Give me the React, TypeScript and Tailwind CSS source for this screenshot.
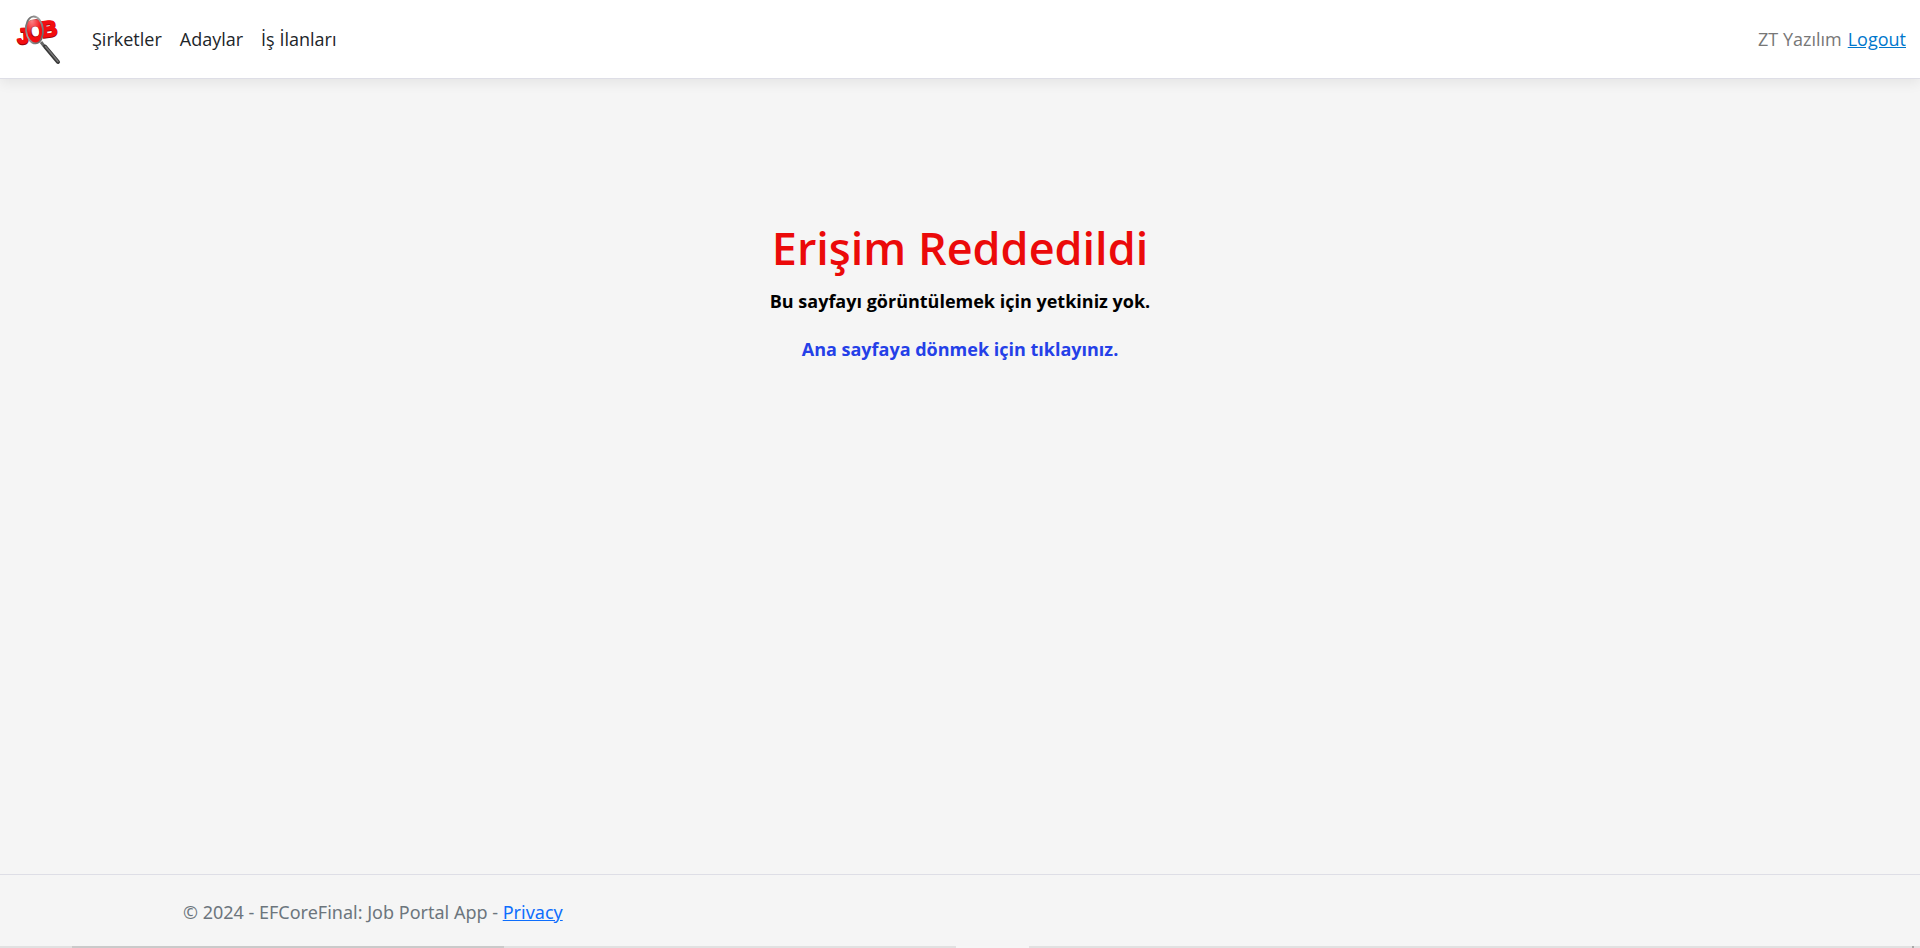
const navItems = ["Şirketler", "Adaylar", "İş İlanları"];

function Logo() {
  return (
    <svg viewBox="0 0 60 60" className="size-15" role="img" aria-label="Job">
      <defs>
        <linearGradient id="handle" x1="0" y1="1" x2="1" y2="0">
          <stop offset="0" stopColor="#333" />
          <stop offset="0.5" stopColor="#777" />
          <stop offset="1" stopColor="#444" />
        </linearGradient>
        <linearGradient id="ring" x1="0" y1="0" x2="1" y2="1">
          <stop offset="0" stopColor="#555" />
          <stop offset="0.4" stopColor="#a5a5a5" />
          <stop offset="1" stopColor="#555" />
        </linearGradient>
        <radialGradient id="glass" cx="0.4" cy="0.15" r="0.55">
          <stop offset="0" stopColor="#fff" stopOpacity="0.5" />
          <stop offset="1" stopColor="#fff" stopOpacity="0" />
        </radialGradient>
        <clipPath id="lens">
          <ellipse cx="26.5" cy="21" rx="8.5" ry="13.5" transform="rotate(-6 26 21)" />
        </clipPath>
      </defs>
      <g
        fontFamily="'Liberation Sans', Arial, sans-serif"
        fontWeight="700"
        strokeLinejoin="round"
        textAnchor="middle"
      >
        <g fill="#9b0508" stroke="#9b0508" strokeWidth="2">
          <text x="15" y="35" fontSize="21" transform="rotate(-3 14 26)">J</text>
          <text x="41" y="28" fontSize="22" transform="rotate(-8 41 20)">B</text>
        </g>
        <g fill="#f20d10" stroke="#f20d10" strokeWidth="1.6">
          <text x="15" y="34" fontSize="21" transform="rotate(-3 13 26)">J</text>
          <text x="41" y="27" fontSize="22" transform="rotate(-8 42 20)">B</text>
        </g>
        <g clipPath="url(#lens)">
          <ellipse cx="26.5" cy="21" rx="10" ry="14" fill="#fff" />
          <text x="27.5" y="32.5" fontSize="29" fontFamily="'Liberation Sans Narrow', 'Liberation Sans', sans-serif" fill="#b0080b" stroke="#b0080b" strokeWidth="4" transform="rotate(-6 27 22)">O</text>
          <text x="26.5" y="32.5" fontSize="29" fontFamily="'Liberation Sans Narrow', 'Liberation Sans', sans-serif" fill="#f40c10" stroke="#f40c10" strokeWidth="2.5" transform="rotate(-6 27 22)">O</text>
        </g>
      </g>
      <ellipse cx="26.5" cy="21" rx="8.5" ry="13.5" fill="url(#glass)" stroke="url(#ring)" strokeWidth="1.8" transform="rotate(-6 26 21)" />
      <path d="M33 33 L36 37" stroke="#666" strokeWidth="3" />
      <path d="M37 37.5 L50 53" stroke="#383838" strokeWidth="4" strokeLinecap="round" />
      <path d="M37.5 37.5 L50 52.5" stroke="url(#handle)" strokeWidth="1.5" strokeLinecap="round" />
    </svg>
  );
}

export default function App() {
  return (
    <div className="flex min-h-screen flex-col bg-[#f5f5f5] font-['Open_Sans','Noto_Sans',sans-serif] text-lg leading-7">
      <header className="border-b border-[#dedee6] bg-white shadow-[0_4px_12px_rgba(0,0,0,0.07)]">
        <nav className="flex h-[78px] items-center justify-between pr-3.5 pl-2">
          <div className="flex items-center">
            <a href="#" aria-label="Job Portal">
              <Logo />
            </a>
            <ul className="ml-6 flex gap-[18px] text-[#212529]">
              {navItems.map((item) => (
                <li key={item}>
                  <a href="#">{item}</a>
                </li>
              ))}
            </ul>
          </div>
          <div className="flex gap-1.5">
            <span className="text-[#777]">ZT Yazılım</span>
            <a href="#" className="text-[#0077cc] underline">
              Logout
            </a>
          </div>
        </nav>
      </header>

      <main className="flex-1 pt-[140px] text-center">
        <h1 className="text-[45px] leading-[58px] font-semibold text-[#eb0a0a]">Erişim Reddedildi</h1>
        <p className="mt-2.5 font-bold text-black">Bu sayfayı görüntülemek için yetkiniz yok.</p>
        <p className="mt-5 font-bold text-[#2440e8]">
          <a href="#">Ana sayfaya dönmek için tıklayınız.</a>
        </p>
      </main>

      <footer className="border-t border-[#dedee6] font-['Noto_Sans','Open_Sans',sans-serif] text-[#6c757d]">
        <div className="mx-auto flex h-[71px] max-w-[1554px] items-center pt-0.5">
          <p>
            © 2024 - EFCoreFinal: Job Portal App -{" "}
            <a href="#" className="text-[#0d6efd] underline">
              Privacy
            </a>
          </p>
        </div>
        <div className="flex h-0.5 bg-[#e1e1e1]">
          <div className="ml-[72px] w-[432px] bg-[#cacaca]" />
          <div className="ml-[452px] w-[73px] bg-[#f5f5f5]" />
          <div className="mr-1.5 ml-auto w-0.5 bg-[#a8a8a8]" />
        </div>
      </footer>
    </div>
  );
}
